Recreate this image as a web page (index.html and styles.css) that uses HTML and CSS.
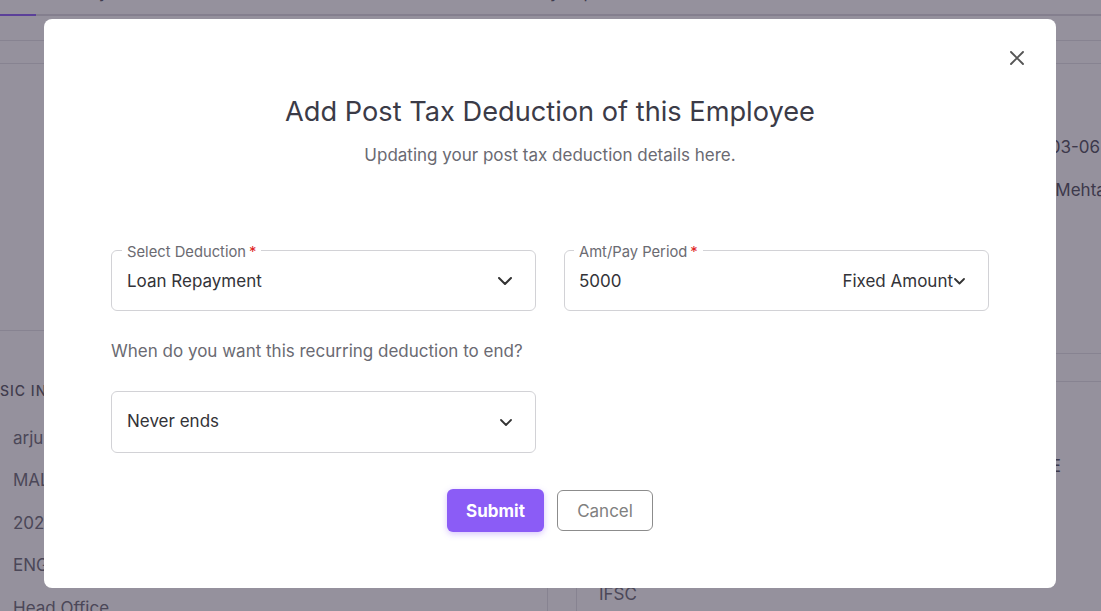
FILE: index.html
```html
<!DOCTYPE html>
<html lang="en">
<head>
<meta charset="utf-8">
<title>Add Post Tax Deduction</title>
<link rel="stylesheet" href="styles.css">
</head>
<body>
<div class="page">
  <nav class="tabs">
    <div class="tab active"><span class="tab-label">Info</span></div>
    <div class="tab tab-salary"><span class="tab-label">Salary</span></div>
    <div class="tab tab-docs"><span class="tab-label">Documents</span></div>
    <div class="tab tab-pay"><span class="tab-label">Pay Slips</span></div>
  </nav>
  <div class="band"></div>
  <div class="band"></div>
  <main class="content">
    <section class="col-left">
      <div class="left-top"></div>
      <div class="basic">
        <h4 class="section-title">SIC INFORMATION</h4>
        <div class="basic-row">arjun</div>
        <div class="basic-row">MALE</div>
        <div class="basic-row">2023-03-06</div>
        <div class="basic-row">ENGINEERING</div>
        <div class="basic-row">Head Office</div>
      </div>
    </section>
    <section class="col-right">
      <div class="right-top">
        <div class="kv"><span class="k">Date of Joining</span><span class="v">2023-03-06</span></div>
        <div class="kv"><span class="k">Reporting Manager</span><span class="v">Rohan Mehta</span></div>
      </div>
      <div class="right-band"></div>
      <div class="right-bottom">
        <div class="kv"><span class="k">Status</span><span class="v">ACTIVE</span></div>
        <div class="kv"><span class="k">Bank</span><span class="v">HDFC</span></div>
        <div class="kv"><span class="k">Account</span><span class="v">XXXX</span></div>
        <div class="kv"><span class="k">IFSC</span><span class="v"></span></div>
      </div>
    </section>
  </main>
</div>

<div class="overlay">
  <div class="modal">
    <button class="close" aria-label="Close">
      <svg width="14" height="14" viewBox="0 0 14 14"><path d="M1 1L13 13M13 1L1 13" stroke="#555" stroke-width="1.9" stroke-linecap="round" fill="none"/></svg>
    </button>
    <h2 class="modal-title">Add Post Tax Deduction of this Employee</h2>
    <p class="modal-sub">Updating your post tax deduction details here.</p>

    <div class="form-grid">
      <fieldset class="field">
        <legend class="field-label">Select Deduction<span class="req">*</span></legend>
        <div class="field-row">
          <span class="field-value">Loan Repayment</span>
          <svg class="chev" width="14" height="8" viewBox="0 0 14 8"><path d="M1 1L7 7L13 1" stroke="#333" stroke-width="2" fill="none" stroke-linecap="round" stroke-linejoin="round"/></svg>
        </div>
      </fieldset>
      <fieldset class="field field-amt">
        <legend class="field-label">Amt/Pay Period<span class="req">*</span></legend>
        <div class="field-row">
          <span class="field-value">5000</span>
          <span class="amt-type">Fixed Amount<svg class="chev-sm" width="11" height="7" viewBox="0 0 11 7"><path d="M1 1L5.5 5.5L10 1" stroke="#333" stroke-width="1.8" fill="none" stroke-linecap="round" stroke-linejoin="round"/></svg></span>
        </div>
      </fieldset>

      <p class="question">When do you want this recurring deduction to end?</p>
      <div class="select-box">
        <span class="field-value">Never ends</span>
        <svg class="chev" width="12" height="7" viewBox="0 0 12 7"><path d="M1 1L6 6L11 1" stroke="#333" stroke-width="1.8" fill="none" stroke-linecap="round" stroke-linejoin="round"/></svg>
      </div>
    </div>

    <div class="actions">
      <button class="btn btn-primary">Submit</button>
      <button class="btn btn-outline">Cancel</button>
    </div>
  </div>
</div>
</body>
</html>
```

FILE: styles.css
```css
* { box-sizing: border-box; }

html, body {
  margin: 0;
  padding: 0;
  width: 1101px;
  height: 611px;
  overflow: hidden;
}

body {
  font-family: Inter, "Noto Sans", "Liberation Sans", sans-serif;
  color: #6b6b74;
  background: #ffffff;
}

/* ---------- background page ---------- */
.page {
  width: 1101px;
  height: 611px;
  overflow: hidden;
  background: #ffffff;
}

.tabs {
  display: flex;
  height: 16px;
  box-shadow: inset 0 -2px 0 #dcdbe0;
}

.tab {
  height: 16px;
  overflow: hidden;
  font-size: 17px;
  color: #555560;
}

.tab-label {
  display: block;
  line-height: 20px;
  margin-top: -18px;
  white-space: nowrap;
}

.tab.active {
  width: 36px;
  border-bottom: 2px solid #8b5cf6;
  text-align: center;
  color: #8b5cf6;
}

.tab-salary { margin-left: 22px; }
.tab-docs { margin-left: 140px; }
.tab-pay { margin-left: 190px; }

.band {
  height: 25px;
  border-bottom: 1px solid #e3e3e6;
}

.band + .band {
  height: 23px;
}

.content {
  display: flex;
  height: 547px;
}

.col-left {
  width: 548px;
  flex: 0 0 548px;
  border-right: 1px solid #e3e3e6;
}

.left-top {
  height: 267px;
  border-bottom: 1px solid #e3e3e6;
}

.basic {
  display: flex;
  flex-direction: column;
  gap: 22.5px;
  padding-top: 50px;
}

.section-title {
  margin: 0 0 4px;
  font-size: 14px;
  line-height: 20px;
  font-weight: 500;
  letter-spacing: 1px;
  color: #55555f;
}

.basic-row {
  padding-left: 13px;
  font-size: 17px;
  line-height: 20px;
}

.col-right {
  margin-left: 28px;
  flex: 1 1 auto;
  min-width: 0;
  overflow: hidden;
  border-left: 1px solid #e3e3e6;
}

.right-top {
  height: 290px;
  padding-top: 73px;
  display: flex;
  flex-direction: column;
  gap: 23px;
  border-bottom: 1px solid #e3e3e6;
}

.right-band {
  height: 28px;
  border-bottom: 1px solid #e3e3e6;
}

.right-bottom {
  padding-top: 74px;
  display: flex;
  flex-direction: column;
  gap: 22.5px;
}

.kv {
  display: grid;
  grid-template-columns: 401px 1fr;
  padding-left: 22px;
  font-size: 17px;
  line-height: 20px;
  white-space: nowrap;
}

.v { color: #4e4e5a; }

/* ---------- overlay + modal ---------- */
.overlay {
  position: fixed;
  inset: 0;
  background: rgba(43, 35, 60, 0.5);
  display: flex;
  justify-content: flex-start;
  align-items: flex-start;
  padding: 19px 0 0 44px;
}

.modal {
  position: relative;
  width: 1012px;
  background: #ffffff;
  border-radius: 8px;
  padding: 76px 67px 56px;
}

.close {
  position: absolute;
  top: 31px;
  right: 32px;
  width: 15px;
  height: 15px;
  padding: 0;
  border: 0;
  background: transparent;
  display: flex;
  align-items: center;
  justify-content: center;
}

.modal-title {
  margin: 0;
  text-align: center;
  font-size: 27.2px;
  line-height: 34px;
  font-weight: 400;
  color: #3b3b47;
}

.modal-sub {
  margin: 16px 0 0;
  text-align: center;
  font-size: 17px;
  line-height: 20px;
  color: #6a6a72;
}

.form-grid {
  margin-top: 75px;
  display: grid;
  grid-template-columns: 1fr 1fr;
  column-gap: 28px;
}

.field {
  margin: 0;
  min-width: 0;
  border: 1px solid #d2d2d6;
  border-radius: 6px;
  padding: 0 23px 0 15px;
}

.field-amt {
  padding-left: 14px;
}

.field-label {
  margin-left: -5px;
  padding: 4px 5px 0;
  font-size: 14.75px;
  line-height: 16px;
  color: #6b6b72;
}

.req {
  color: #e02424;
  margin-left: 3px;
}

.field-row {
  height: 42px;
  margin-bottom: 8px;
  display: flex;
  align-items: center;
  justify-content: space-between;
}

.field-value {
  font-size: 17px;
  line-height: 20px;
  color: #333338;
}

.amt-type {
  display: flex;
  align-items: center;
  font-size: 17px;
  line-height: 20px;
  color: #333338;
}

.chev-sm { margin-left: 1px; margin-top: 1px; }

.question {
  grid-column: 1;
  margin: 30px 0 0;
  font-size: 17px;
  line-height: 20px;
  color: #6a6a72;
}

.select-box {
  grid-column: 1;
  margin-top: 30px;
  height: 62px;
  border: 1px solid #d2d2d6;
  border-radius: 6px;
  padding: 0 23px 0 15px;
  display: flex;
  align-items: center;
  justify-content: space-between;
}

.select-box .field-value {
  margin-top: -2px;
}

.actions {
  margin-top: 36px;
  display: flex;
  justify-content: center;
  align-items: center;
  gap: 13px;
}

.btn {
  font-family: Inter, "Noto Sans", "Liberation Sans", sans-serif;
  font-size: 17px;
  border-radius: 6px;
  cursor: pointer;
}

.btn-primary {
  width: 97px;
  height: 43px;
  border: 0;
  background: #8b5cf6;
  color: #ffffff;
  font-weight: 700;
  box-shadow: 0 2px 6px rgba(139, 92, 246, 0.35);
}

.btn-outline {
  width: 96px;
  height: 41px;
  border: 1px solid #8c8c8c;
  background: #ffffff;
  color: #808080;
  font-weight: 400;
}
```
